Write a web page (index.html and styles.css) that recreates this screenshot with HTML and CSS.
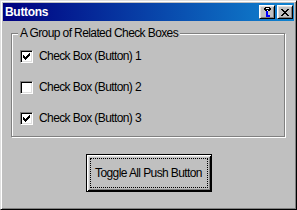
FILE: index.html
```html
<!DOCTYPE html>
<html lang="en">
<head>
    <meta charset="UTF-8">
    <title>Buttons</title>
    <link rel="stylesheet" href="styles.css">
</head>
<body>
<div class="window">
    <div class="titlebar">
        <span class="title">Buttons</span>
        <div class="caption_buttons">
            <span class="cap_btn">
                <svg width="9" height="11" viewBox="0 0 9 11" shape-rendering="crispEdges">
                    <path d="M2 0h5v1h-5z M1 1h2v1h-2z M6 1h2v1h-2z M1 2h2v1h-2z M6 2h2v1h-2z M2 3h2v1h-2z M5 3h2v1h-2z M3 2h3v1h-3z" fill="#000"/>
                    <path d="M3 1h3v1h-3z M4 3h1v1h-1z" fill="#fff"/>
                    <path d="M3 4h2v6h-2z M5 8h2v2h-2z" fill="#0000ff"/>
                </svg>
            </span>
            <span class="cap_btn">
                <svg width="8" height="7" viewBox="0 0 8 7" shape-rendering="crispEdges">
                    <path d="M0 0h2v1h-2z M6 0h2v1h-2z M1 1h2v1h-2z M5 1h2v1h-2z M2 2h4v1h-4z M3 3h2v1h-2z M2 4h4v1h-4z M1 5h2v1h-2z M5 5h2v1h-2z M0 6h2v1h-2z M6 6h2v1h-2z" fill="#000"/>
                </svg>
            </span>
        </div>
    </div>

    <div class="client">
        <fieldset class="group">
            <legend>A Group of Related Check Boxes</legend>
            <label class="check">
                <span class="box">
                    <svg class="tick" width="9" height="9" viewBox="0 0 9 9" shape-rendering="crispEdges">
                        <path d="M7 1h1v1h-1z M6 2h2v1h-2z M1 3h1v1h-1z M5 3h3v1h-3z M1 4h2v1h-2z M4 4h3v1h-3z M1 5h5v1h-5z M2 6h3v1h-3z M3 7h1v1h-1z" fill="#000"/>
                    </svg>
                </span>
                Check Box (Button) 1
            </label>
            <label class="check">
                <span class="box"></span>
                Check Box (Button) 2
            </label>
            <label class="check">
                <span class="box">
                    <svg class="tick" width="9" height="9" viewBox="0 0 9 9" shape-rendering="crispEdges">
                        <path d="M7 1h1v1h-1z M6 2h2v1h-2z M1 3h1v1h-1z M5 3h3v1h-3z M1 4h2v1h-2z M4 4h3v1h-3z M1 5h5v1h-5z M2 6h3v1h-3z M3 7h1v1h-1z" fill="#000"/>
                    </svg>
                </span>
                Check Box (Button) 3
            </label>
        </fieldset>

        <div class="actions">
            <button class="push_button"><span class="focus_rect">Toggle All Push Button</span></button>
        </div>
    </div>
</div>
</body>
</html>
```

FILE: styles.css
```css
body {
  margin: 0;
  background: #c0c0c0;
  font-family: "Liberation Sans", Arial, sans-serif;
  font-size: 12px;
}

.window {
  box-sizing: border-box;
  width: 297px;
  height: 210px;
  padding: 2px;
  background: #c0c0c0;
  border: 1px solid;
  border-color: #dfdfdf #000 #000 #dfdfdf;
  box-shadow: inset 1px 1px #fff, inset -1px -1px #808080;
  display: flex;
  flex-direction: column;
}

.titlebar {
  height: 18px;
  padding: 0 1px 0 2px;
  display: flex;
  align-items: center;
  justify-content: space-between;
  background: linear-gradient(to right, #000080, #1084d0);
  color: #fff;
}

.title {
  font-weight: bold;
  letter-spacing: -0.3px;
  line-height: 18px;
}

.caption_buttons {
  display: flex;
  gap: 2px;
}

.cap_btn {
  box-sizing: border-box;
  width: 16px;
  height: 14px;
  background: #c0c0c0;
  border: 1px solid;
  border-color: #fff #000 #000 #fff;
  box-shadow: inset 1px 1px #dfdfdf, inset -1px -1px #808080;
  display: flex;
  align-items: center;
  justify-content: center;
}

.client {
  flex: 1;
  display: flex;
  flex-direction: column;
}

.group {
  box-sizing: border-box;
  width: 274px;
  margin: 5px 0 0 8px;
  padding: 10px 0 11px 8px;
  border: 1px solid #808080;
  box-shadow: inset 1px 1px #fff, 1px 1px #fff;
  display: flex;
  flex-direction: column;
  gap: 18px;
}

.group legend {
  margin-left: -2px;
  padding: 0 2px;
  line-height: 14px;
  letter-spacing: -0.6px;
  background: #c0c0c0;
}

.check {
  height: 13px;
  display: flex;
  align-items: center;
  line-height: 13px;
  letter-spacing: -0.6px;
}

.box {
  box-sizing: border-box;
  width: 13px;
  height: 13px;
  margin-right: 6px;
  padding: 1px;
  background: #fff;
  border: 1px solid;
  border-color: #808080 #fff #fff #808080;
  box-shadow: inset 1px 1px #000, inset -1px -1px #dfdfdf;
  flex-shrink: 0;
}

.tick {
  display: block;
}

.actions {
  margin-top: 17px;
  display: flex;
  justify-content: center;
}

.push_button {
  box-sizing: border-box;
  width: 126px;
  height: 38px;
  padding: 3px;
  background: #c0c0c0;
  border: 1px solid #000;
  box-shadow: inset 1px 1px #fff, inset -1px -1px #000, inset 2px 2px #dfdfdf, inset -2px -2px #808080;
  font-family: "Liberation Sans", Arial, sans-serif;
  font-size: 12px;
  letter-spacing: -0.6px;
  color: #000;
  display: flex;
}

.focus_rect {
  flex: 1;
  border: 1px dotted #000;
  display: flex;
  align-items: center;
  justify-content: center;
}
```
